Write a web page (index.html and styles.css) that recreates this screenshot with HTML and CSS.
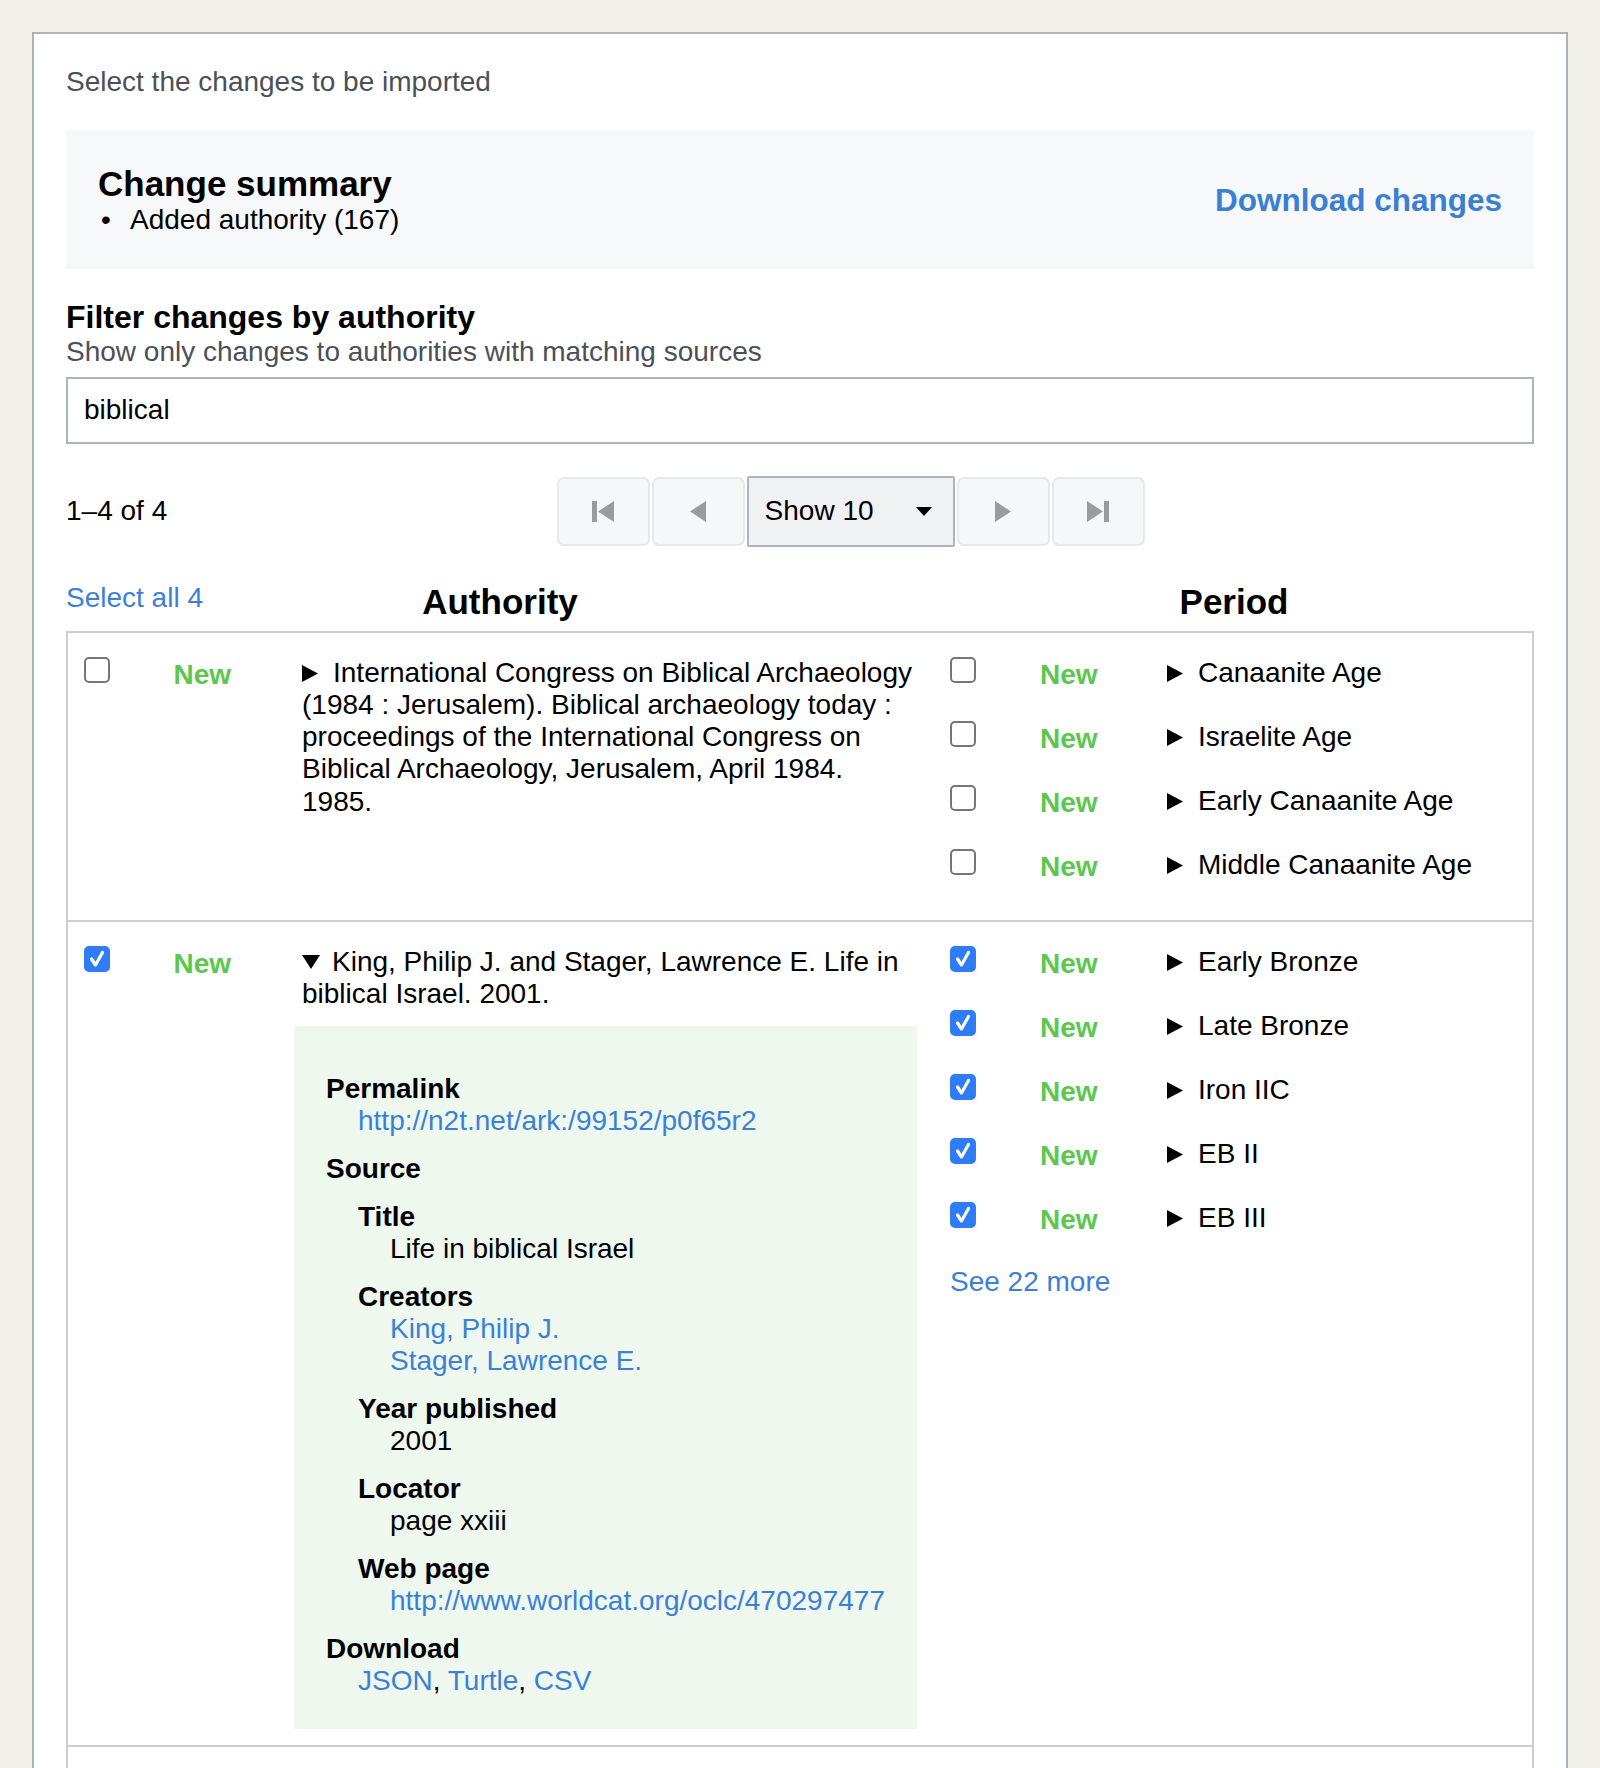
FILE: index.html
```html
<!DOCTYPE html>
<html lang="en">
<head>
<meta charset="utf-8">
<title>Select changes</title>
<link rel="stylesheet" href="styles.css">
</head>
<body>
<div class="panel">
  <p class="intro">Select the changes to be imported</p>

  <section class="summary">
    <div class="summary-main">
      <h2 class="summary-title">Change summary</h2>
      <ul class="summary-list"><li>Added authority (167)</li></ul>
    </div>
    <a class="download" href="#">Download changes</a>
  </section>

  <section class="filter">
    <h3 class="filter-title">Filter changes by authority</h3>
    <p class="filter-hint">Show only changes to authorities with matching sources</p>
    <input class="filter-input" type="text" value="biblical">
  </section>

  <div class="pager">
    <div class="count">1–4 of 4</div>
    <div class="pager-controls">
      <button class="pg-btn" type="button" aria-label="First page">
        <svg width="22" height="21" viewBox="0 0 22 21"><rect x="0" y="0" width="5" height="21" fill="#9b9b9b"/><polygon points="22,0 6,10.5 22,21" fill="#9b9b9b"/></svg>
      </button>
      <button class="pg-btn" type="button" aria-label="Previous page">
        <svg width="16" height="21" viewBox="0 0 16 21"><polygon points="16,0 0,10.5 16,21" fill="#9b9b9b"/></svg>
      </button>
      <div class="show-select"><span>Show 10</span>
        <svg width="16" height="9" viewBox="0 0 16 9"><polygon points="0,0 16,0 8,9" fill="#000"/></svg>
      </div>
      <button class="pg-btn" type="button" aria-label="Next page">
        <svg width="16" height="21" viewBox="0 0 16 21"><polygon points="0,0 16,10.5 0,21" fill="#9b9b9b"/></svg>
      </button>
      <button class="pg-btn" type="button" aria-label="Last page">
        <svg width="22" height="21" viewBox="0 0 22 21"><polygon points="0,0 16,10.5 0,21" fill="#9b9b9b"/><rect x="17" y="0" width="5" height="21" fill="#9b9b9b"/></svg>
      </button>
    </div>
  </div>

  <div class="thead">
    <div class="th th-auth">
      <a class="select-all" href="#">Select all 4</a>
      <span class="th-label">Authority</span>
    </div>
    <div class="th th-period"><span class="th-label">Period</span></div>
  </div>

  <div class="rows">
    <div class="row">
      <div class="auth-cell">
        <span class="cb"></span>
        <span class="new">New</span>
        <div class="auth-body">
          <div class="auth-title"><svg class="tri" width="16" height="17" viewBox="0 0 16 17"><polygon points="0,0 16,8.5 0,17" fill="#000"/></svg>International Congress on Biblical Archaeology (1984 : Jerusalem). Biblical archaeology today : proceedings of the International Congress on Biblical Archaeology, Jerusalem, April 1984. 1985.</div>
        </div>
      </div>
      <div class="period-cell">
        <div class="plist plist-padded">
          <div class="pitem"><span class="cb"></span><span class="new">New</span><span class="pname"><svg class="tri" width="16" height="17" viewBox="0 0 16 17"><polygon points="0,0 16,8.5 0,17" fill="#000"/></svg>Canaanite Age</span></div>
          <div class="pitem"><span class="cb"></span><span class="new">New</span><span class="pname"><svg class="tri" width="16" height="17" viewBox="0 0 16 17"><polygon points="0,0 16,8.5 0,17" fill="#000"/></svg>Israelite Age</span></div>
          <div class="pitem"><span class="cb"></span><span class="new">New</span><span class="pname"><svg class="tri" width="16" height="17" viewBox="0 0 16 17"><polygon points="0,0 16,8.5 0,17" fill="#000"/></svg>Early Canaanite Age</span></div>
          <div class="pitem"><span class="cb"></span><span class="new">New</span><span class="pname"><svg class="tri" width="16" height="17" viewBox="0 0 16 17"><polygon points="0,0 16,8.5 0,17" fill="#000"/></svg>Middle Canaanite Age</span></div>
        </div>
      </div>
    </div>

    <div class="row">
      <div class="auth-cell">
        <span class="cb cb-on"><svg width="22" height="22" viewBox="0 0 22 22"><path d="M5.5 11 L9.5 17 L16.5 4.5" fill="none" stroke="#fff" stroke-width="3.2" stroke-linecap="round" stroke-linejoin="round"/></svg></span>
        <span class="new">New</span>
        <div class="auth-body">
          <div class="auth-title"><svg class="tri tri-down" width="18" height="14" viewBox="0 0 18 14"><polygon points="0,0 18,0 9,14" fill="#000"/></svg>King, Philip J. and Stager, Lawrence E. Life in biblical Israel. 2001.</div>
          <div class="details">
            <dl class="dl">
              <dt>Permalink</dt>
              <dd><a href="#">http://n2t.net/ark:/99152/p0f65r2</a></dd>
              <dt>Source</dt>
              <dd>
                <dl class="dl dl-nested">
                  <dt>Title</dt>
                  <dd>Life in biblical Israel</dd>
                  <dt>Creators</dt>
                  <dd><a href="#">King, Philip J.</a><br><a href="#">Stager, Lawrence E.</a></dd>
                  <dt>Year published</dt>
                  <dd>2001</dd>
                  <dt>Locator</dt>
                  <dd>page xxiii</dd>
                  <dt>Web page</dt>
                  <dd class="nowrap"><a href="#">http://www.worldcat.org/oclc/470297477</a></dd>
                </dl>
              </dd>
              <dt>Download</dt>
              <dd><a href="#">JSON</a>, <a href="#">Turtle</a>, <a href="#">CSV</a></dd>
            </dl>
          </div>
        </div>
      </div>
      <div class="period-cell">
        <div class="plist">
          <div class="pitem"><span class="cb cb-on"><svg width="22" height="22" viewBox="0 0 22 22"><path d="M5.5 11 L9.5 17 L16.5 4.5" fill="none" stroke="#fff" stroke-width="3.2" stroke-linecap="round" stroke-linejoin="round"/></svg></span><span class="new">New</span><span class="pname"><svg class="tri" width="16" height="17" viewBox="0 0 16 17"><polygon points="0,0 16,8.5 0,17" fill="#000"/></svg>Early Bronze</span></div>
          <div class="pitem"><span class="cb cb-on"><svg width="22" height="22" viewBox="0 0 22 22"><path d="M5.5 11 L9.5 17 L16.5 4.5" fill="none" stroke="#fff" stroke-width="3.2" stroke-linecap="round" stroke-linejoin="round"/></svg></span><span class="new">New</span><span class="pname"><svg class="tri" width="16" height="17" viewBox="0 0 16 17"><polygon points="0,0 16,8.5 0,17" fill="#000"/></svg>Late Bronze</span></div>
          <div class="pitem"><span class="cb cb-on"><svg width="22" height="22" viewBox="0 0 22 22"><path d="M5.5 11 L9.5 17 L16.5 4.5" fill="none" stroke="#fff" stroke-width="3.2" stroke-linecap="round" stroke-linejoin="round"/></svg></span><span class="new">New</span><span class="pname"><svg class="tri" width="16" height="17" viewBox="0 0 16 17"><polygon points="0,0 16,8.5 0,17" fill="#000"/></svg>Iron IIC</span></div>
          <div class="pitem"><span class="cb cb-on"><svg width="22" height="22" viewBox="0 0 22 22"><path d="M5.5 11 L9.5 17 L16.5 4.5" fill="none" stroke="#fff" stroke-width="3.2" stroke-linecap="round" stroke-linejoin="round"/></svg></span><span class="new">New</span><span class="pname"><svg class="tri" width="16" height="17" viewBox="0 0 16 17"><polygon points="0,0 16,8.5 0,17" fill="#000"/></svg>EB II</span></div>
          <div class="pitem"><span class="cb cb-on"><svg width="22" height="22" viewBox="0 0 22 22"><path d="M5.5 11 L9.5 17 L16.5 4.5" fill="none" stroke="#fff" stroke-width="3.2" stroke-linecap="round" stroke-linejoin="round"/></svg></span><span class="new">New</span><span class="pname"><svg class="tri" width="16" height="17" viewBox="0 0 16 17"><polygon points="0,0 16,8.5 0,17" fill="#000"/></svg>EB III</span></div>
          <a class="see-more" href="#">See 22 more</a>
        </div>
      </div>
    </div>

    <div class="row row-empty">
      <div class="auth-cell"></div>
      <div class="period-cell"></div>
    </div>
  </div>
</div>
</body>
</html>
```

FILE: styles.css
```css
body {
  margin: 0;
  background: #f2f0ea;
  font-family: "Liberation Sans", Arial, Helvetica, sans-serif;
  font-size: 28px;
  line-height: 1.15;
  color: #000;
}

a {
  color: #3b80d6;
  text-decoration: none;
}

.panel {
  margin: 32px 32px 0;
  border: 2px solid #aeb3ba;
  background: #fff;
  padding: 32px;
}

.intro {
  margin: 0 0 32px;
  color: #4b5057;
}

.summary {
  display: flex;
  align-items: center;
  justify-content: space-between;
  background: #f6f8fa;
  padding: 34px 32px 32px;
}

.summary-title {
  margin: 0;
  font-size: 35px;
  font-weight: bold;
}

.summary-list {
  margin: 0;
  padding-left: 32px;
  list-style: none;
}

.summary-list li::before {
  content: "•";
  display: inline-block;
  width: 29px;
  margin-left: -32px;
  padding-left: 3px;
}

.download {
  font-size: 31.5px;
  font-weight: bold;
  color: #3b7fd5;
}

.filter-title {
  margin: 30px 0 0;
  font-size: 32px;
  font-weight: bold;
}

.filter-hint {
  margin: 1px 0 0;
  color: #4b5057;
}

.filter-input {
  display: block;
  width: 100%;
  box-sizing: border-box;
  height: 67px;
  margin-top: 8px;
  padding: 0 16px;
  border: 2px solid #adb4bc;
  border-radius: 0;
  font: inherit;
  color: #000;
  background: #fff;
  outline: none;
}

.pager {
  display: flex;
  align-items: center;
  margin-top: 32px;
}

.pager-controls {
  flex: 1;
  display: flex;
  justify-content: center;
  align-items: center;
  gap: 2px;
}

.pg-btn {
  width: 93px;
  height: 69px;
  box-sizing: border-box;
  padding: 0;
  border: 2px solid #e7e8ea;
  border-radius: 7px;
  background: #f6f7f8;
  display: flex;
  align-items: center;
  justify-content: center;
}

.show-select {
  width: 208px;
  height: 71px;
  box-sizing: border-box;
  border: 2px solid #adb4bc;
  border-radius: 2px;
  background: #f0f1f3;
  padding: 0 21px 0 16px;
  display: flex;
  align-items: center;
  justify-content: space-between;
}

.thead {
  display: grid;
  grid-template-columns: 868px 1fr;
  margin-top: 35px;
  margin-bottom: 9px;
}

.th-auth {
  display: grid;
  grid-template-columns: 1fr auto 1fr;
  align-items: start;
}

.th-label {
  font-size: 35px;
  font-weight: bold;
}

.th-period {
  text-align: center;
}

.rows {
  border: 2px solid #cdcdcd;
}

.row {
  display: grid;
  grid-template-columns: 866px 1fr;
}

.row + .row {
  border-top: 2px solid #cdcdcd;
}

.row-empty {
  min-height: 200px;
}

.auth-cell {
  display: grid;
  grid-template-columns: 89.5px 128.5px 1fr;
  align-items: start;
  padding: 24px 17px 16px 16px;
}

.period-cell {
  padding: 24px 16px 16px;
}

.cb {
  display: flex;
  align-items: center;
  justify-content: center;
  width: 26px;
  height: 26px;
  box-sizing: border-box;
  border: 2px solid #767676;
  border-radius: 5px;
  background: #fff;
}

.cb-on {
  border-color: #2f7cf6;
  background: #2f7cf6;
}

.new {
  color: #5cc74f;
  font-weight: bold;
  line-height: 32px;
  padding-top: 2px;
}

.tri {
  margin-right: 15px;
}

.tri-down {
  margin-right: 12px;
  vertical-align: 2px;
}

.details {
  margin: 16px 0 0 -8px;
  background: #eef8ef;
  padding: 47px 32px 32px;
}

.dl {
  margin: 0;
}

.dl dt {
  font-weight: bold;
}

.dl dd {
  margin: 0 0 15.6px 32px;
}

.dl dd:last-child {
  margin-bottom: 0;
}

.dl-nested {
  margin-top: 15.6px;
}

.nowrap {
  white-space: nowrap;
}

.plist {
  display: flex;
  flex-direction: column;
  gap: 32px;
}

.plist-padded {
  padding-bottom: 23px;
}

.pitem {
  display: grid;
  grid-template-columns: 90px 127px 1fr;
  align-items: start;
  height: 32px;
}

.pname {
  white-space: nowrap;
}

.see-more {
  line-height: 32px;
}
```
